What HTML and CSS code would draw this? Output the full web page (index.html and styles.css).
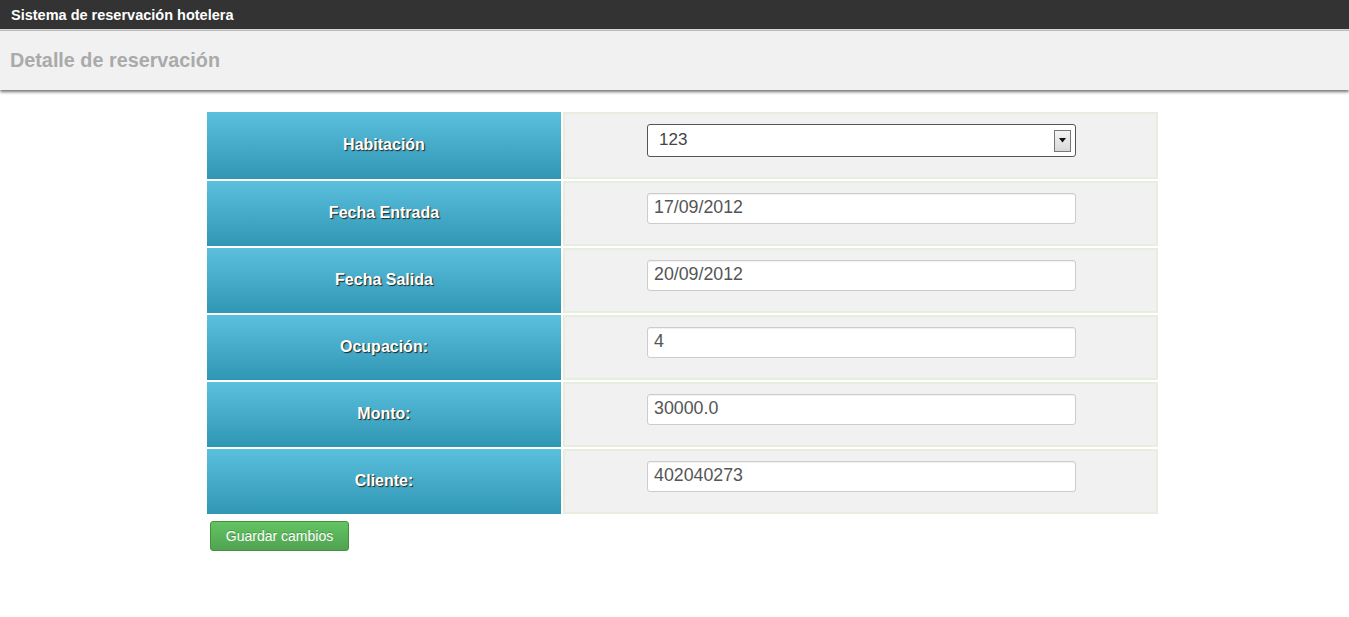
FILE: index.html
```html
<!DOCTYPE html>
<html lang="es">
<head>
<meta charset="utf-8">
<title>Detalle de reservación</title>
<link rel="stylesheet" href="styles.css">
</head>
<body>
<div class="topbar">Sistema de reservación hotelera</div>
<div class="pagehead"><h1>Detalle de reservación</h1></div>
<main class="content">
  <table class="detail">
    <tr>
      <th>Habitación</th>
      <td>
        <div class="select"><span>123</span><span class="arrow"><svg width="9" height="5" viewBox="0 0 9 5"><path d="M1 0h7L4.5 4.5z" fill="#111"/></svg></span></div>
      </td>
    </tr>
    <tr><th>Fecha Entrada</th><td><input class="field" type="text" value="17/09/2012"></td></tr>
    <tr><th>Fecha Salida</th><td><input class="field" type="text" value="20/09/2012"></td></tr>
    <tr><th>Ocupación:</th><td><input class="field" type="text" value="4"></td></tr>
    <tr><th>Monto:</th><td><input class="field" type="text" value="30000.0"></td></tr>
    <tr><th>Cliente:</th><td><input class="field" type="text" value="402040273"></td></tr>
  </table>
  <button class="btn-save" type="button">Guardar cambios</button>
</main>
</body>
</html>
```
FILE: styles.css
```css
* { box-sizing: border-box; }
html, body { margin: 0; padding: 0; background: #fff; }
body { font-family: "Liberation Sans", Arial, sans-serif; }

.topbar {
  height: 30px;
  background: #333;
  color: #fff;
  font-weight: bold;
  font-size: 14.5px;
  line-height: 30px;
  padding-left: 11px;
  border-bottom: 1px solid #ddd;
}
.pagehead {
  height: 60px;
  background: #f1f1f1;
  border-top: 1px solid #bbb;
  box-shadow: 0 2px 3px rgba(0,0,0,0.55);
  padding-left: 10px;
}
.pagehead h1 {
  margin: 0;
  font-size: 19.8px;
  line-height: 58px;
  color: #aaa;
  font-weight: bold;
}

.content {
  padding: 20px 0 0 205px;
}
.detail {
  border-collapse: separate;
  border-spacing: 2px;
}
.detail th {
  width: 354px;
  height: 65px;
  background: linear-gradient(to bottom, #5bc0de, #2f96b4);
  color: #fff;
  font-size: 16px;
  font-weight: bold;
  text-shadow: 1px 1px 1px #222;
  text-align: center;
  vertical-align: middle;
  padding: 0 0 1px;
}
.detail td {
  width: 595px;
  background: #f1f1f1;
  border: 2px solid #e8eedf;
  padding: 10px 0 20px 82px;
  vertical-align: top;
}
.field {
  display: block;
  width: 429px;
  height: 31px;
  border: 1px solid #ccc;
  border-radius: 3px;
  background: #fff;
  font-family: "Liberation Sans", Arial, sans-serif;
  font-size: 17.8px;
  color: #555;
  padding: 0 6px 2px;
  margin: 0;
  box-shadow: inset 0 1px 1px rgba(0,0,0,0.06);
}
.select {
  width: 429px;
  height: 33px;
  border: 1px solid #555;
  border-radius: 3px;
  background: #fff;
  display: flex;
  align-items: center;
  justify-content: space-between;
  padding: 0 4px 2px 11px;
  font-size: 17px;
  color: #444;
}
.select .arrow {
  width: 17px;
  height: 22px;
  margin-top: 2px;
  border: 1px solid #777;
  background: linear-gradient(to bottom, #f4f4f4, #d8d8d8);
  display: flex;
  align-items: center;
  justify-content: center;
}
.btn-save {
  margin: 5px 0 0 5px;
  width: 139px;
  height: 30px;
  border: 1px solid #43913f;
  border-radius: 3px;
  background: linear-gradient(to bottom, #62c462, #51a351);
  color: #fff;
  font-family: "Liberation Sans", Arial, sans-serif;
  font-size: 14px;
  text-shadow: 0 -1px 0 rgba(0,0,0,0.2);
  padding: 0;
}
```
